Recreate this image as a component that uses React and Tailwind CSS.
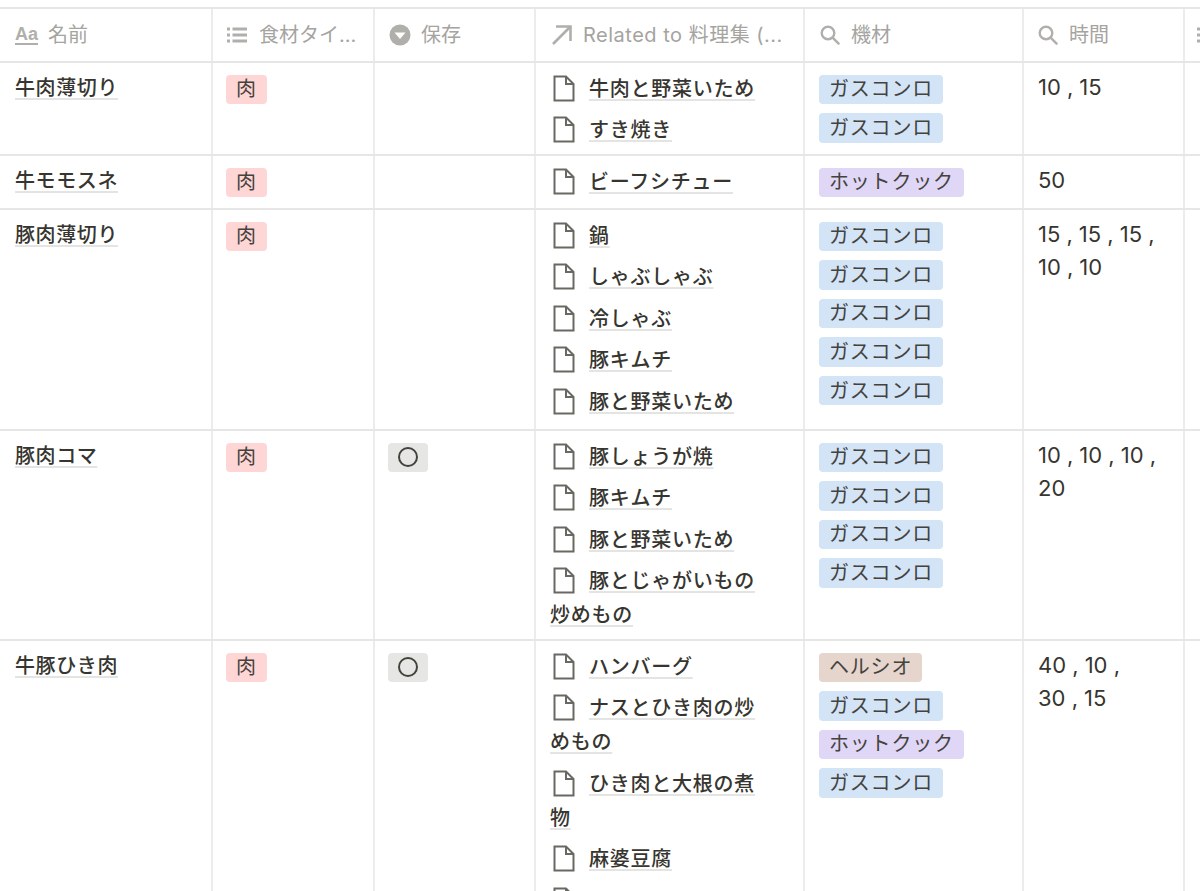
const font = { fontFamily: 'Inter, "Noto Sans CJK JP", "Noto Sans", sans-serif' };

const tagColor = {
  gas: "bg-[#d3e4f7]",
  hot: "bg-[#e0d6f6]",
  hel: "bg-[#e6d5cd]",
  meat: "bg-[#ffd6d6]",
  gray: "bg-[#e6e6e4]",
};

const rows = [
  { name: "牛肉薄切り", h: "h-[93px]", type: "肉", keep: false, related: ["牛肉と野菜いため", "すき焼き"], tools: ["gas", "gas"], time: ["10 ,", "15"] },
  { name: "牛モモスネ", h: "h-[54px]", type: "肉", keep: false, related: ["ビーフシチュー"], tools: ["hot"], time: ["50"] },
  { name: "豚肉薄切り", h: "h-[221px]", type: "肉", keep: false, related: ["鍋", "しゃぶしゃぶ", "冷しゃぶ", "豚キムチ", "豚と野菜いため"], tools: ["gas", "gas", "gas", "gas", "gas"], time: ["15 ,", "15 ,", "15 ,", "10 ,", "10"] },
  { name: "豚肉コマ", h: "h-[210px]", type: "肉", keep: true, related: ["豚しょうが焼", "豚キムチ", "豚と野菜いため", "豚とじゃがいもの炒めもの"], tools: ["gas", "gas", "gas", "gas"], time: ["10 ,", "10 ,", "10 ,", "20"] },
  { name: "牛豚ひき肉", h: "h-[260px]", type: "肉", keep: true, related: ["ハンバーグ", "ナスとひき肉の炒めもの", "ひき肉と大根の煮物", "麻婆豆腐", "キーマカレー"], tools: ["hel", "gas", "hot", "gas"], time: ["40 ,", "10 ,", "30 ,", "15"] },
];

const toolLabel = { gas: "ガスコンロ", hot: "ホットクック", hel: "ヘルシオ" };
const cols = "grid grid-cols-[213px_162px_161px_269px_219px_161px_16px]";
const cell = "border-r-2 border-[#ececeb] min-w-0";
const link = "underline decoration-2 decoration-[#e4e4e2] underline-offset-[3px] [text-decoration-skip-ink:none]";

const Tag = ({ color, children }) => (
  <span className={`inline-flex h-[29.5px] items-center rounded-[4px] px-[10px] text-[20px] leading-none tracking-[0.8px] text-[#44423d] ${color}`}>
    {children}
  </span>
);

const PageIcon = () => (
  <svg width="22" height="27" viewBox="0 0 22 27" fill="none" stroke="#696863" strokeWidth="2" className="ml-[3px] mr-[14px] inline-block align-[-6px]">
    <path d="M1.5 1.5H13L20.5 9V25.5H1.5Z" />
    <path d="M13 1.5V9H20.5" />
  </svg>
);

const HeaderCell = ({ icon, label, className = "", labelClass = "" }) => (
  <div className={`${cell} flex items-center overflow-hidden whitespace-nowrap text-[20px] text-[#a5a4a0] ${className}`}>
    {icon}
    <span className={labelClass}>{label}</span>
  </div>
);

const AaIcon = () => (
  <span className="mr-[10px] flex flex-col items-center text-[#b0afab]" style={{ fontFamily: '"Liberation Sans", sans-serif' }}>
    <span className="text-[18px] font-bold leading-[17px]">Aa</span>
    <span className="h-[2px] w-[23px] bg-[#b0afab]" />
  </span>
);

const ListIcon = () => (
  <svg width="20" height="16" viewBox="0 0 20 16" fill="#b0afab" className="mr-[12px] shrink-0">
    <rect x="0" y="0.5" width="3" height="3" />
    <rect x="0" y="6.5" width="3" height="3" />
    <rect x="0" y="12.5" width="3" height="3" />
    <rect x="5.5" y="0.5" width="14.5" height="3" />
    <rect x="5.5" y="6.5" width="14.5" height="3" />
    <rect x="5.5" y="12.5" width="14.5" height="3" />
  </svg>
);

const SelectIcon = () => (
  <svg width="22" height="22" viewBox="0 0 22 22" className="mr-[10px]">
    <circle cx="11" cy="11" r="10.5" fill="#b0afab" />
    <path d="M5.5 8.5H16.5L11 15Z" fill="#fff" />
  </svg>
);

const ArrowIcon = () => (
  <svg width="22" height="22" viewBox="0 0 22 22" fill="none" stroke="#b0afab" strokeWidth="2.6" className="mr-[10px]">
    <path d="M2 20L19.5 2.5" />
    <path d="M5 2.5H19.5V17" />
  </svg>
);

const SearchIcon = () => (
  <svg width="20" height="20" viewBox="0 0 20 20" fill="none" stroke="#b0afab" strokeWidth="2.4" className="mr-[11px] shrink-0">
    <circle cx="8" cy="8" r="6.3" />
    <path d="M12.6 12.6L18.6 18.6" strokeLinecap="round" />
  </svg>
);

const Row = ({ row }) => (
  <div className={`${cols} ${row.h} border-b-2 border-[#e6e6e5]`}>
    <div className={`${cell} pl-[15px] pt-[8px]`}>
      <span className={`${link} text-[20px] font-medium leading-[34px] tracking-[0.6px] text-[#37352f]`}>{row.name}</span>
    </div>
    <div className={`${cell} pl-[13px] pt-[11.5px]`}>
      <Tag color={tagColor.meat}>{row.type}</Tag>
    </div>
    <div className={`${cell} pl-[13px] pt-[11.5px]`}>
      {row.keep && <Tag color={tagColor.gray}><span className="h-[20px] w-[20px] rounded-full border-2 border-[#44423d]" /></Tag>}
    </div>
    <div className={`${cell} flex flex-col gap-[7.5px] pl-[14px] pr-[40px] pt-[8.5px]`}>
      {row.related.map((r) => (
        <div key={r} className="text-[20px] font-medium leading-[34px] tracking-[0.75px] text-[#37352f]">
          <PageIcon />
          <span className={link}>{r}</span>
        </div>
      ))}
    </div>
    <div className={`${cell} flex flex-col items-start gap-[9.1px] pl-[14px] pt-[11.5px]`}>
      {row.tools.map((t, i) => (
        <Tag key={i} color={tagColor[t]}>{toolLabel[t]}</Tag>
      ))}
    </div>
    <div className={`${cell} flex flex-wrap content-start gap-x-[6px] pl-[14px] pr-[24px] pt-[8px] text-[22px] leading-[33px] text-[#37352f]`}>
      {row.time.map((t, i) => (
        <span key={i} className="whitespace-pre">{t}</span>
      ))}
    </div>
    <div />
  </div>
);

export default function App() {
  return (
    <div className="h-[891px] w-[1200px] overflow-hidden bg-white pt-[7px]" style={font}>
      <div className={`${cols} h-[56px] border-y-2 border-[#e6e6e5]`}>
        <HeaderCell className="pl-[15px]" icon={<AaIcon />} label="名前" />
        <HeaderCell className="pl-[14px]" icon={<ListIcon />} label="食材タイ..." />
        <HeaderCell className="pl-[14px]" icon={<SelectIcon />} label="保存" />
        <HeaderCell className="pl-[15px]" icon={<ArrowIcon />} label="Related to 料理集 (..." labelClass="tracking-[0.5px]" />
        <HeaderCell className="pl-[15px]" icon={<SearchIcon />} label="機材" />
        <HeaderCell className="pl-[14px]" icon={<SearchIcon />} label="時間" />
        <div className="flex items-center pl-[12px]"><ListIcon /></div>
      </div>
      {rows.map((row) => (
        <Row key={row.name} row={row} />
      ))}
    </div>
  );
}
